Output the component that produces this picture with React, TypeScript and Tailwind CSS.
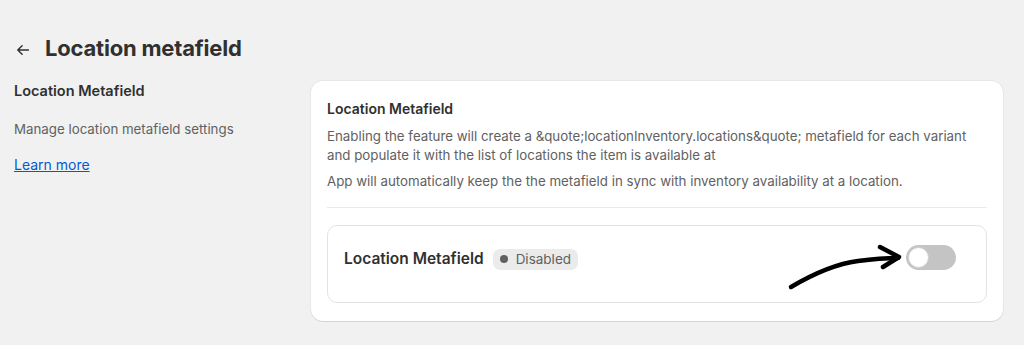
import React, { useState } from "react";

export default function App() {
  const [enabled, setEnabled] = useState(false);

  return (
    <div
      className="w-[1024px] h-[345px] bg-[#f1f1f1] text-[#303030] overflow-hidden"
      style={{ fontFamily: "Inter, 'Noto Sans', sans-serif" }}
    >
      {/* Page header */}
      <div className="flex items-center gap-[13px] pl-[14px] pt-[33px] h-[62px]">
        <svg width="18" height="18" viewBox="0 0 20 20" className="mt-[4px] text-[#303030]">
          <path d="M16 10H4.5M9 5.2 4.2 10 9 14.8" fill="none" stroke="currentColor" strokeWidth="1.6" strokeLinecap="round" strokeLinejoin="round" />
        </svg>
        <h1 className="text-[22px] font-bold tracking-[-0.2px] leading-none">Location metafield</h1>
      </div>

      <div className="flex pl-[14px] pr-[21px] pt-[19px] gap-[16px]">
        {/* Left: description */}
        <div className="w-[281px] shrink-0">
          <h2 className="text-[14.5px] font-semibold leading-[20px]">Location Metafield</h2>
          <p className="text-[13.3px] text-[#616161] leading-[20px] mt-[18px]">Manage location metafield settings</p>
          <a href="#" className="block text-[14px] text-[#005bd3] underline leading-[20px] mt-[16px]">Learn more</a>
        </div>

        {/* Right: card */}
        <div className="flex-1 bg-white rounded-[12px] shadow-[0_1px_0_rgba(0,0,0,0.08),0_0_0_1px_rgba(0,0,0,0.04)] px-[16px] pt-[18px] pb-[18px]">
          <h3 className="text-[14px] font-semibold leading-[20px]">Location Metafield</h3>
          <p className="text-[13.3px] text-[#616161] leading-[19px] mt-[8px] pr-[10px]">
            Enabling the feature will create a &amp;quote;locationInventory.locations&amp;quote; metafield for each variant and populate it with the list of locations the item is available at
          </p>
          <p className="text-[13.3px] text-[#616161] leading-[19px] mt-[7px]">
            App will automatically keep the the metafield in sync with inventory availability at a location.
          </p>
          <div className="h-px bg-[#ebebeb] mt-[16px]" />

          {/* Inner setting row */}
          <div className="relative mt-[17px] border border-[#e3e3e3] rounded-[10px] h-[78px] flex items-center pl-[16px] pr-[30px]">
            <div className="flex items-center gap-[9px] -mt-[10px]">
              <span className="text-[15.5px] font-semibold">Location Metafield</span>
              <span className="flex items-center gap-[8px] bg-[#ebebeb] rounded-[7px] h-[21px] px-[7px] text-[13.5px] text-[#616161]">
                <span className="w-[8px] h-[8px] rounded-full bg-[#616161]" />
                Disabled
              </span>
            </div>
            <button
              onClick={() => setEnabled(!enabled)}
              className={`ml-auto -mt-[14px] w-[50px] h-[25px] rounded-full p-[2px] flex ${enabled ? "bg-[#303030] justify-end" : "bg-[#c4c4c4] justify-start"}`}
            >
              <span className="w-[21px] h-[21px] rounded-full bg-white border border-[#d0d0d0]" />
            </button>

            {/* hand-drawn arrow annotation */}
            <svg className="absolute left-[455px] top-[14px]" width="130" height="52" viewBox="0 0 130 52" fill="none">
              <path d="M8 47C30 34 52 24 75 21C90 19 103 18 115 18" stroke="#000" strokeWidth="4.5" strokeLinecap="round" />
              <path d="M97 7 116 17 100 27" stroke="#000" strokeWidth="4.5" strokeLinecap="round" strokeLinejoin="round" />
            </svg>
          </div>
        </div>
      </div>
    </div>
  );
}
